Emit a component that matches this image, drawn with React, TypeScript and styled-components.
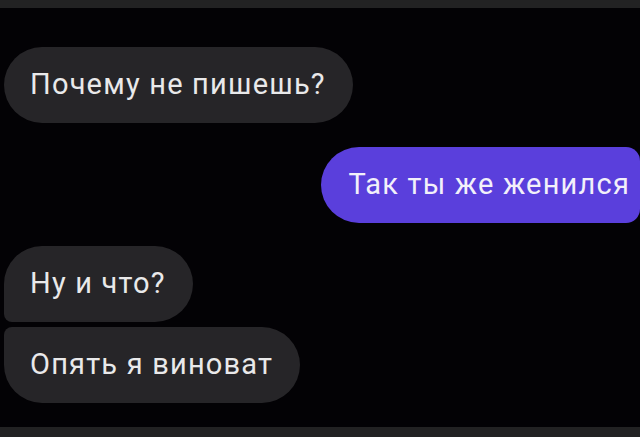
import React from 'react';
import styled, {createGlobalStyle} from 'styled-components';

const GlobalStyle = createGlobalStyle`
    html, body {
        margin: 0;
        padding: 0;
        background: #030205;
    }
    body {
        font-family: Roboto, "Noto Sans", "Liberation Sans", sans-serif;
    }
`;

//Styled Components
const Screen = styled.div`
    width: 640px;
    height: 437px;
    display: flex;
    flex-direction: column;
    background: #030205;
    overflow: hidden;
`;

const Bar = styled.div<{ $h: number }>`
    height: ${p => p.$h}px;
    flex-shrink: 0;
    background: #222223;
`;

const Chat = styled.div`
    flex: 1;
    display: flex;
    flex-direction: column;
    padding: 39px 0 0 4px;
`;

const Bubble = styled.div<{ $mine?: boolean; $gap: number; $corners: string }>`
    align-self: ${p => (p.$mine ? 'flex-end' : 'flex-start')};
    margin-top: ${p => p.$gap}px;
    height: 76px;
    display: flex;
    align-items: center;
    padding: ${p => (p.$mine ? '0 10px 3px 27px' : '0 27px 3px 26px')};
    border-radius: ${p => p.$corners};
    background: ${p => (p.$mine ? '#5a3fdc' : '#262528')};
    color: ${p => (p.$mine ? '#f2f0fa' : '#e9e9ea')};
    font-size: 29px;
    letter-spacing: 1.2px;
    white-space: nowrap;
    box-sizing: border-box;
`;

const messages = [
    {text: 'Почему не пишешь?', gap: 0, corners: '38px'},
    {text: 'Так ты же женился', gap: 24, corners: '38px 14px 14px 38px', mine: true},
    {text: 'Ну и что?', gap: 23, corners: '38px 38px 38px 8px'},
    {text: 'Опять я виноват', gap: 5, corners: '8px 38px 38px 38px'},
];

export default function App() {
    return (
        <Screen>
            <GlobalStyle/>
            <Bar $h={8}/>
            <Chat>
                {messages.map((m, i) => (
                    <Bubble key={i} $mine={m.mine} $gap={m.gap} $corners={m.corners}>
                        {m.text}
                    </Bubble>
                ))}
            </Chat>
            <Bar $h={10}/>
        </Screen>
    );
}
